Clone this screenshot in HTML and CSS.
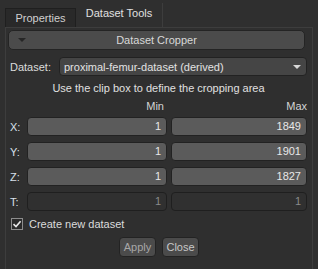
FILE: index.html
```html
<!DOCTYPE html>
<html lang="en">

<head>
  <meta charset="UTF-8" />
  <title>Dataset Tools</title>
  <link rel="stylesheet" href="styles.css">
</head>

<body>
  <div class="tabs">
    <div class="tab">Properties</div>
    <div class="tab active">Dataset Tools</div>
  </div>
  <div class="panel">
    <!-- collapsible section header -->
    <div class="section-head">
      <span class="arrow"></span>
      <span>Dataset Cropper</span>
    </div>

    <div class="form">
      <div class="dataset-row">
        <label>Dataset:</label>
        <div class="combo">
          <span>proximal-femur-dataset (derived)</span>
          <span class="combo-arrow"></span>
        </div>
      </div>

      <div class="note">Use the clip box to define the cropping area</div>

      <div class="grid-row head">
        <span class="axis"></span>
        <span class="col-min">Min</span>
        <span class="col-max">Max</span>
      </div>

      <div class="grid-row">
        <span class="axis">X:</span>
        <div class="field col-min">1</div>
        <div class="field col-max">1849</div>
      </div>
      <div class="grid-row">
        <span class="axis">Y:</span>
        <div class="field col-min">1</div>
        <div class="field col-max">1901</div>
      </div>
      <div class="grid-row">
        <span class="axis">Z:</span>
        <div class="field col-min">1</div>
        <div class="field col-max">1827</div>
      </div>
      <div class="grid-row">
        <span class="axis">T:</span>
        <div class="field col-min disabled">1</div>
        <div class="field col-max disabled">1</div>
      </div>

      <div class="check-row">
        <span class="checkbox">
          <svg width="10" height="10" viewBox="0 0 10 10">
            <path d="M1.5 5.2 L4 7.6 L8.6 2.2" fill="none" stroke="#e8e8e8" stroke-width="1.6" />
          </svg>
        </span>
        <span>Create new dataset</span>
      </div>

      <div class="buttons">
        <button class="btn apply">Apply</button>
        <button class="btn">Close</button>
      </div>
    </div>
  </div>
</body>

</html>
```

FILE: styles.css
```css
/* base */
body {
  margin: 0;
  width: 318px;
  height: 269px;
  overflow: hidden;
  background-color: #2f2f2f;
  color: #dcdcdc;
  font-family: "Liberation Sans", Arial, sans-serif;
  font-size: 11px;
}

/* tabs */
.tabs {
  display: flex;
  align-items: flex-end;
  height: 27px;
  padding-left: 5px;
}

.tab {
  box-sizing: border-box;
  width: 71px;
  height: 19px;
  line-height: 18px;
  text-align: center;
  background-color: #292929;
  border: 1px solid #1f1f1f;
  border-bottom: none;
  color: #d0d0d0;
}

.tab.active {
  width: 87px;
  height: 24px;
  line-height: 20px;
  background-color: #2f2f2f;
  border: none;
  border-right: 1px solid #3d3d3d;
  color: #e0e0e0;
}

/* panel */
.panel {
  box-sizing: border-box;
  width: 308px;
  height: 250px;
  margin-left: 5px;
  border: 1px solid #3d3d3d;
  border-bottom: none;
}

.section-head {
  box-sizing: border-box;
  position: relative;
  height: 20px;
  margin: 2px 7px 0 2px;
  line-height: 18px;
  text-align: center;
  background-color: #4b4b4b;
  border: 1px solid #242424;
  border-radius: 5px;
  color: #d8d8d8;
}

.section-head .arrow {
  position: absolute;
  left: 9px;
  top: 7px;
  width: 0;
  height: 0;
  border-left: 4px solid transparent;
  border-right: 4px solid transparent;
  border-top: 4px solid #262626;
}

.form {
  padding: 0 5px 0 4px;
}

.dataset-row {
  display: flex;
  align-items: center;
  margin-top: 7px;
  height: 19px;
}

.dataset-row label {
  width: 49px;
}

.combo {
  box-sizing: border-box;
  flex: 1;
  display: flex;
  align-items: center;
  justify-content: space-between;
  height: 19px;
  padding: 0 5px 0 4px;
  background-color: #454545;
  border: 1px solid #222;
  border-radius: 4px;
  color: #e2e2e2;
}

.combo-arrow {
  width: 0;
  height: 0;
  border-left: 4px solid transparent;
  border-right: 4px solid transparent;
  border-top: 4px solid #d8d8d8;
}

.note {
  margin-top: 3px;
  line-height: 19px;
  text-align: center;
  color: #e0e0e0;
}

.grid-row {
  display: flex;
  align-items: center;
  height: 19px;
  margin-top: 6px;
}

.grid-row.head {
  height: 15px;
  margin-top: 0;
  margin-bottom: -2px;
  color: #d4d4d4;
}

.axis {
  width: 17px;
  color: #d8e0ea;
}

.col-min {
  box-sizing: border-box;
  width: 140px;
  margin-right: 4px;
  text-align: right;
  padding-right: 3px;
}

.col-max {
  box-sizing: border-box;
  flex: 1;
  text-align: right;
}

.field {
  height: 19px;
  line-height: 17px;
  padding-right: 5px;
  background-color: #5b5b5b;
  border: 1px solid #222;
  border-radius: 4px;
  color: #e8e8e8;
}

.field.disabled {
  background-color: #303030;
  border-color: #1f1f1f;
  color: #8a8a8a;
}

.check-row {
  display: flex;
  align-items: center;
  height: 26px;
  padding-left: 1px;
}

.checkbox {
  box-sizing: border-box;
  display: flex;
  align-items: center;
  justify-content: center;
  width: 12px;
  height: 12px;
  margin-right: 6px;
  background-color: #2a2a2a;
  border: 1px solid #8c8c8c;
}

.buttons {
  display: flex;
  justify-content: center;
  gap: 6px;
  padding-left: 1px;
}

.btn {
  box-sizing: border-box;
  width: 37px;
  height: 20px;
  padding: 0;
  font-family: inherit;
  font-size: 11px;
  background-color: #4b4b4b;
  border: 1px solid #232323;
  border-radius: 4px;
  color: #c8c8c8;
}

.btn.apply {
  color: #a8a8a8;
}
```
